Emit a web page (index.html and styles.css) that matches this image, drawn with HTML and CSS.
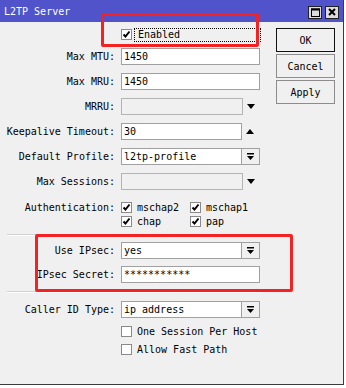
FILE: index.html
```html
<!DOCTYPE html>
<html lang="en">
<head>
    <meta charset="UTF-8">
    <title>L2TP Server</title>
    <link rel="stylesheet" href="styles.css">
</head>
<body>
    <div class="window">
        <div class="titlebar">
            <span class="title">L2TP Server</span>
            <div class="title-btns">
                <span class="tbtn"><svg width="9" height="9" viewBox="0 0 9 9"><rect x="0.5" y="1" width="8" height="7.5" fill="none" stroke="#000" stroke-width="1"/><rect x="0" y="0.5" width="9" height="2" fill="#000"/></svg></span>
                <span class="tbtn"><svg width="8" height="8" viewBox="0 0 8 8"><path d="M1 1 L7 7 M7 1 L1 7" stroke="#000" stroke-width="2"/></svg></span>
            </div>
        </div>

        <div class="content">
            <div class="form">
                <div class="row row-enabled">
                    <span></span>
                    <div class="field">
                        <span class="check on"><svg width="9" height="9" viewBox="0 0 9 9"><path d="M1.5 4.5 L3.5 6.5 L7.5 1.5" fill="none" stroke="#000" stroke-width="2"/></svg></span>
                        <span class="focus">Enabled</span>
                    </div>
                </div>

                <div class="row">
                    <label>Max MTU:</label>
                    <div class="field"><div class="input">1450</div></div>
                </div>
                <div class="row">
                    <label>Max MRU:</label>
                    <div class="field"><div class="input">1450</div></div>
                </div>
                <div class="row">
                    <label>MRRU:</label>
                    <div class="field"><div class="input off"></div><span class="arrow down"></span></div>
                </div>
                <div class="row">
                    <label>Keepalive Timeout:</label>
                    <div class="field"><div class="input short">30</div><span class="arrow up"></span></div>
                </div>
                <div class="row">
                    <label>Default Profile:</label>
                    <div class="field"><div class="input short">l2tp-profile</div><span class="drop"><svg width="7" height="8" viewBox="0 0 7 8"><rect x="0" y="0" width="7" height="1.5" fill="#000"/><path d="M0 3 H7 L3.5 7 Z" fill="#000"/></svg></span></div>
                </div>
                <div class="row">
                    <label>Max Sessions:</label>
                    <div class="field"><div class="input off"></div><span class="arrow down"></span></div>
                </div>

                <div class="row auth">
                    <label>Authentication:</label>
                    <div class="checks">
                        <div class="opt"><span class="check on"><svg width="9" height="9" viewBox="0 0 9 9"><path d="M1.5 4.5 L3.5 6.5 L7.5 1.5" fill="none" stroke="#000" stroke-width="2"/></svg></span>mschap2</div>
                        <div class="opt"><span class="check on"><svg width="9" height="9" viewBox="0 0 9 9"><path d="M1.5 4.5 L3.5 6.5 L7.5 1.5" fill="none" stroke="#000" stroke-width="2"/></svg></span>mschap1</div>
                        <div class="opt"><span class="check on"><svg width="9" height="9" viewBox="0 0 9 9"><path d="M1.5 4.5 L3.5 6.5 L7.5 1.5" fill="none" stroke="#000" stroke-width="2"/></svg></span>chap</div>
                        <div class="opt"><span class="check on"><svg width="9" height="9" viewBox="0 0 9 9"><path d="M1.5 4.5 L3.5 6.5 L7.5 1.5" fill="none" stroke="#000" stroke-width="2"/></svg></span>pap</div>
                    </div>
                </div>

                <div class="sep"></div>

                <div class="row ipsec-first">
                    <label>Use IPsec:</label>
                    <div class="field"><div class="input short">yes</div><span class="drop"><svg width="7" height="8" viewBox="0 0 7 8"><rect x="0" y="0" width="7" height="1.5" fill="#000"/><path d="M0 3 H7 L3.5 7 Z" fill="#000"/></svg></span></div>
                </div>
                <div class="row ipsec-second">
                    <label>IPsec Secret:</label>
                    <div class="field"><div class="input">***********</div></div>
                </div>

                <div class="sep sep-low"></div>

                <div class="row">
                    <label>Caller ID Type:</label>
                    <div class="field"><div class="input short">ip address</div><span class="drop"><svg width="7" height="8" viewBox="0 0 7 8"><rect x="0" y="0" width="7" height="1.5" fill="#000"/><path d="M0 3 H7 L3.5 7 Z" fill="#000"/></svg></span></div>
                </div>
                <div class="row flag first-flag">
                    <span></span>
                    <div class="opt"><span class="check"></span>One Session Per Host</div>
                </div>
                <div class="row flag">
                    <span></span>
                    <div class="opt"><span class="check"></span>Allow Fast Path</div>
                </div>
            </div>

            <div class="buttons">
                <div class="btn default">OK</div>
                <div class="btn">Cancel</div>
                <div class="btn">Apply</div>
            </div>
        </div>

        <div class="mark mark-enabled"></div>
        <div class="mark mark-ipsec"></div>
    </div>
</body>
</html>
```

FILE: styles.css
```css
* {
    box-sizing: border-box;
}
body {
    margin: 0;
    background: #fff;
    font-family: "DejaVu Sans Mono", "Liberation Mono", monospace;
    font-size: 10px;
    color: #000;
}
.window {
    position: relative;
    width: 344px;
    height: 385px;
    background: #f0f0f0;
    border-right: 1px solid #3c3c3c;
    border-bottom: 1px solid #3c3c3c;
}
.titlebar {
    height: 22px;
    background: #5053c9;
    color: #fff;
    display: flex;
    align-items: center;
    justify-content: space-between;
    padding: 0 4px 0 4px;
}
.title-btns {
    display: flex;
    gap: 3px;
    margin-top: 2px;
}
.tbtn {
    width: 14px;
    height: 13px;
    background: #dcdcdc;
    border: 1px solid #222;
    display: flex;
    align-items: center;
    justify-content: center;
}
.content {
    display: flex;
    padding-top: 5px;
}
.form {
    width: 270px;
    display: flex;
    flex-direction: column;
}
.row {
    display: grid;
    grid-template-columns: 115px 1fr;
    column-gap: 6px;
    height: 17px;
    margin-top: 8px;
    align-items: center;
}
.row label {
    text-align: right;
    white-space: pre;
    line-height: 17px;
}
.row-enabled {
    height: 15px;
    margin-top: 0;
}
.row-enabled + .row {
    margin-top: 6px;
}
.field {
    display: flex;
    align-items: center;
    height: 17px;
}
.row-enabled .field {
    height: 15px;
}
.input {
    width: 139px;
    height: 17px;
    background: #fff;
    border: 1px solid #a0a0a0;
    padding-left: 2px;
    line-height: 15px;
    white-space: pre;
    overflow: hidden;
}
.input.short {
    width: 121px;
}
.input.off {
    width: 122px;
    background: #f0f0f0;
    border-color: #b4b4b4;
}
.drop {
    width: 19px;
    height: 17px;
    margin-left: -1px;
    border: 1px solid #a0a0a0;
    background: #f0f0f0;
    display: flex;
    align-items: center;
    justify-content: center;
}
.arrow {
    width: 0;
    height: 0;
    margin-left: 4px;
    border-left: 4.5px solid transparent;
    border-right: 4.5px solid transparent;
}
.arrow.down {
    border-top: 5px solid #000;
}
.arrow.up {
    border-bottom: 5px solid #000;
}
.check {
    width: 11px;
    height: 11px;
    border: 1px solid #8a8a8a;
    background: #fff;
    display: inline-flex;
    align-items: center;
    justify-content: center;
    flex: none;
}
.focus {
    margin-left: 2px;
    width: 127px;
    height: 14px;
    border: 1px dotted #000;
    padding-left: 3px;
    line-height: 12px;
}
.auth {
    height: 28px;
    margin-top: 10px;
    align-items: start;
}
.auth label {
    line-height: 14px;
    margin-top: 1px;
}
.checks {
    display: grid;
    grid-template-columns: 69px 1fr;
    grid-auto-rows: 14px;
}
.opt {
    display: flex;
    align-items: center;
    gap: 5px;
    white-space: pre;
}
.checks .check {
    margin-top: 1px;
}
.sep {
    margin: 6px 8px 0 7px;
    height: 2px;
    border-top: 1px solid #d2d2d2;
    border-bottom: 1px solid #fff;
}
.ipsec-first {
    margin-top: 6px;
}
.ipsec-second {
    margin-top: 7px;
}
.sep-low {
    margin-top: 8px;
}
.flag {
    height: 14px;
    margin-top: 4px;
}
.first-flag {
    margin-top: 6px;
}
.buttons {
    margin-left: 6px;
    margin-top: 1px;
    display: flex;
    flex-direction: column;
    gap: 2px;
}
.btn {
    width: 59px;
    height: 24px;
    border: 1px solid #8c8c8c;
    background: #f0f0f0;
    display: flex;
    align-items: center;
    justify-content: center;
}
.btn.default {
    border-color: #111;
}
.mark {
    position: absolute;
    border: 3px solid #f42222;
    border-radius: 2px;
}
.mark-enabled {
    left: 101px;
    top: 13px;
    width: 158px;
    height: 34px;
}
.mark-ipsec {
    left: 35px;
    top: 234px;
    width: 258px;
    height: 58px;
}
```
